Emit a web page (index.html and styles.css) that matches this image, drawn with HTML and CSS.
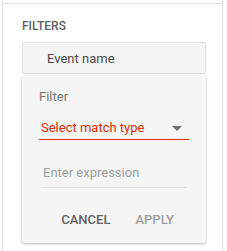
FILE: index.html
```html
<!DOCTYPE html>
<html lang="en">
<head>
    <meta charset="UTF-8">
    <meta name="viewport" content="width=device-width, initial-scale=1.0">
    <title>Filters</title>
    <link rel="stylesheet" href="styles.css">
</head>
<body>
    <div class="sidebar">
        <div class="panel">
            <div class="section-title">FILTERS</div>
            <div class="field-chip">Event name</div>
            <div class="filter-card">
                <div class="filter-label">Filter</div>
                <div class="match-select">
                    <span>Select match type</span>
                    <svg class="caret" viewBox="0 0 10 5">
                        <path d="M0 0h10L5 5z"></path>
                    </svg>
                </div>
                <div class="expression">Enter expression</div>
                <div class="actions">
                    <button class="action-button">CANCEL</button>
                    <button class="action-button disabled">APPLY</button>
                </div>
            </div>
        </div>
    </div>
</body>
</html>
```

FILE: styles.css
```css
body {
    margin: 0;
    background-color: #fff;
    font-family: Roboto, "Noto Sans", Arial, sans-serif;
}

.sidebar {
    margin-left: 2px;
    width: 221px;
    height: 251px;
    padding-top: 3px;
    box-sizing: border-box;
    border-left: 1px solid #e0e0e0;
    border-right: 1px solid #e0e0e0;
}

.panel {
    border-top: 1px solid #e0e0e0;
    padding: 15px 16px 0 19px;
}

.section-title {
    font-size: 12px;
    font-weight: 500;
    line-height: 14px;
    color: #616161;
    margin-bottom: 9px;
}

.field-chip {
    display: flex;
    align-items: center;
    width: 184px;
    height: 32px;
    box-sizing: border-box;
    padding-left: 24px;
    font-size: 13px;
    color: #4a4a4a;
    background-color: #f5f5f5;
    border: 1px solid #e0e0e0;
    border-radius: 2px;
}

.filter-card {
    width: 184px;
    height: 168px;
    box-sizing: border-box;
    margin-top: 1px;
    padding: 14px 17px 0 17px;
    background-color: #f5f5f5;
    border-radius: 2px;
    box-shadow: 0 1px 3px rgba(0, 0, 0, 0.28);
}

.filter-label {
    font-size: 13px;
    line-height: 16px;
    color: #757575;
}

.match-select {
    display: flex;
    align-items: center;
    justify-content: space-between;
    margin-top: 15px;
    padding: 0 7px 3px 2px;
    font-size: 13px;
    line-height: 16px;
    color: #dd2c00;
    border-bottom: 1px solid #dd2c00;
}

.caret {
    width: 10px;
    height: 5px;
    fill: #757575;
}

.expression {
    margin: 25px 2px 0 2px;
    padding: 0 0 6px 2px;
    font-size: 13px;
    line-height: 16px;
    color: #9e9e9e;
    border-bottom: 1px solid #e0e0e0;
}

.actions {
    display: flex;
    justify-content: flex-end;
    gap: 9px;
    margin-top: 20px;
    padding-right: 7px;
}

.action-button {
    padding: 4px 8px;
    font-family: inherit;
    font-size: 13px;
    font-weight: 500;
    line-height: 16px;
    color: #616161;
    background: none;
    border: none;
    cursor: pointer;
}

.action-button.disabled {
    color: #9e9e9e;
    cursor: default;
}
```
